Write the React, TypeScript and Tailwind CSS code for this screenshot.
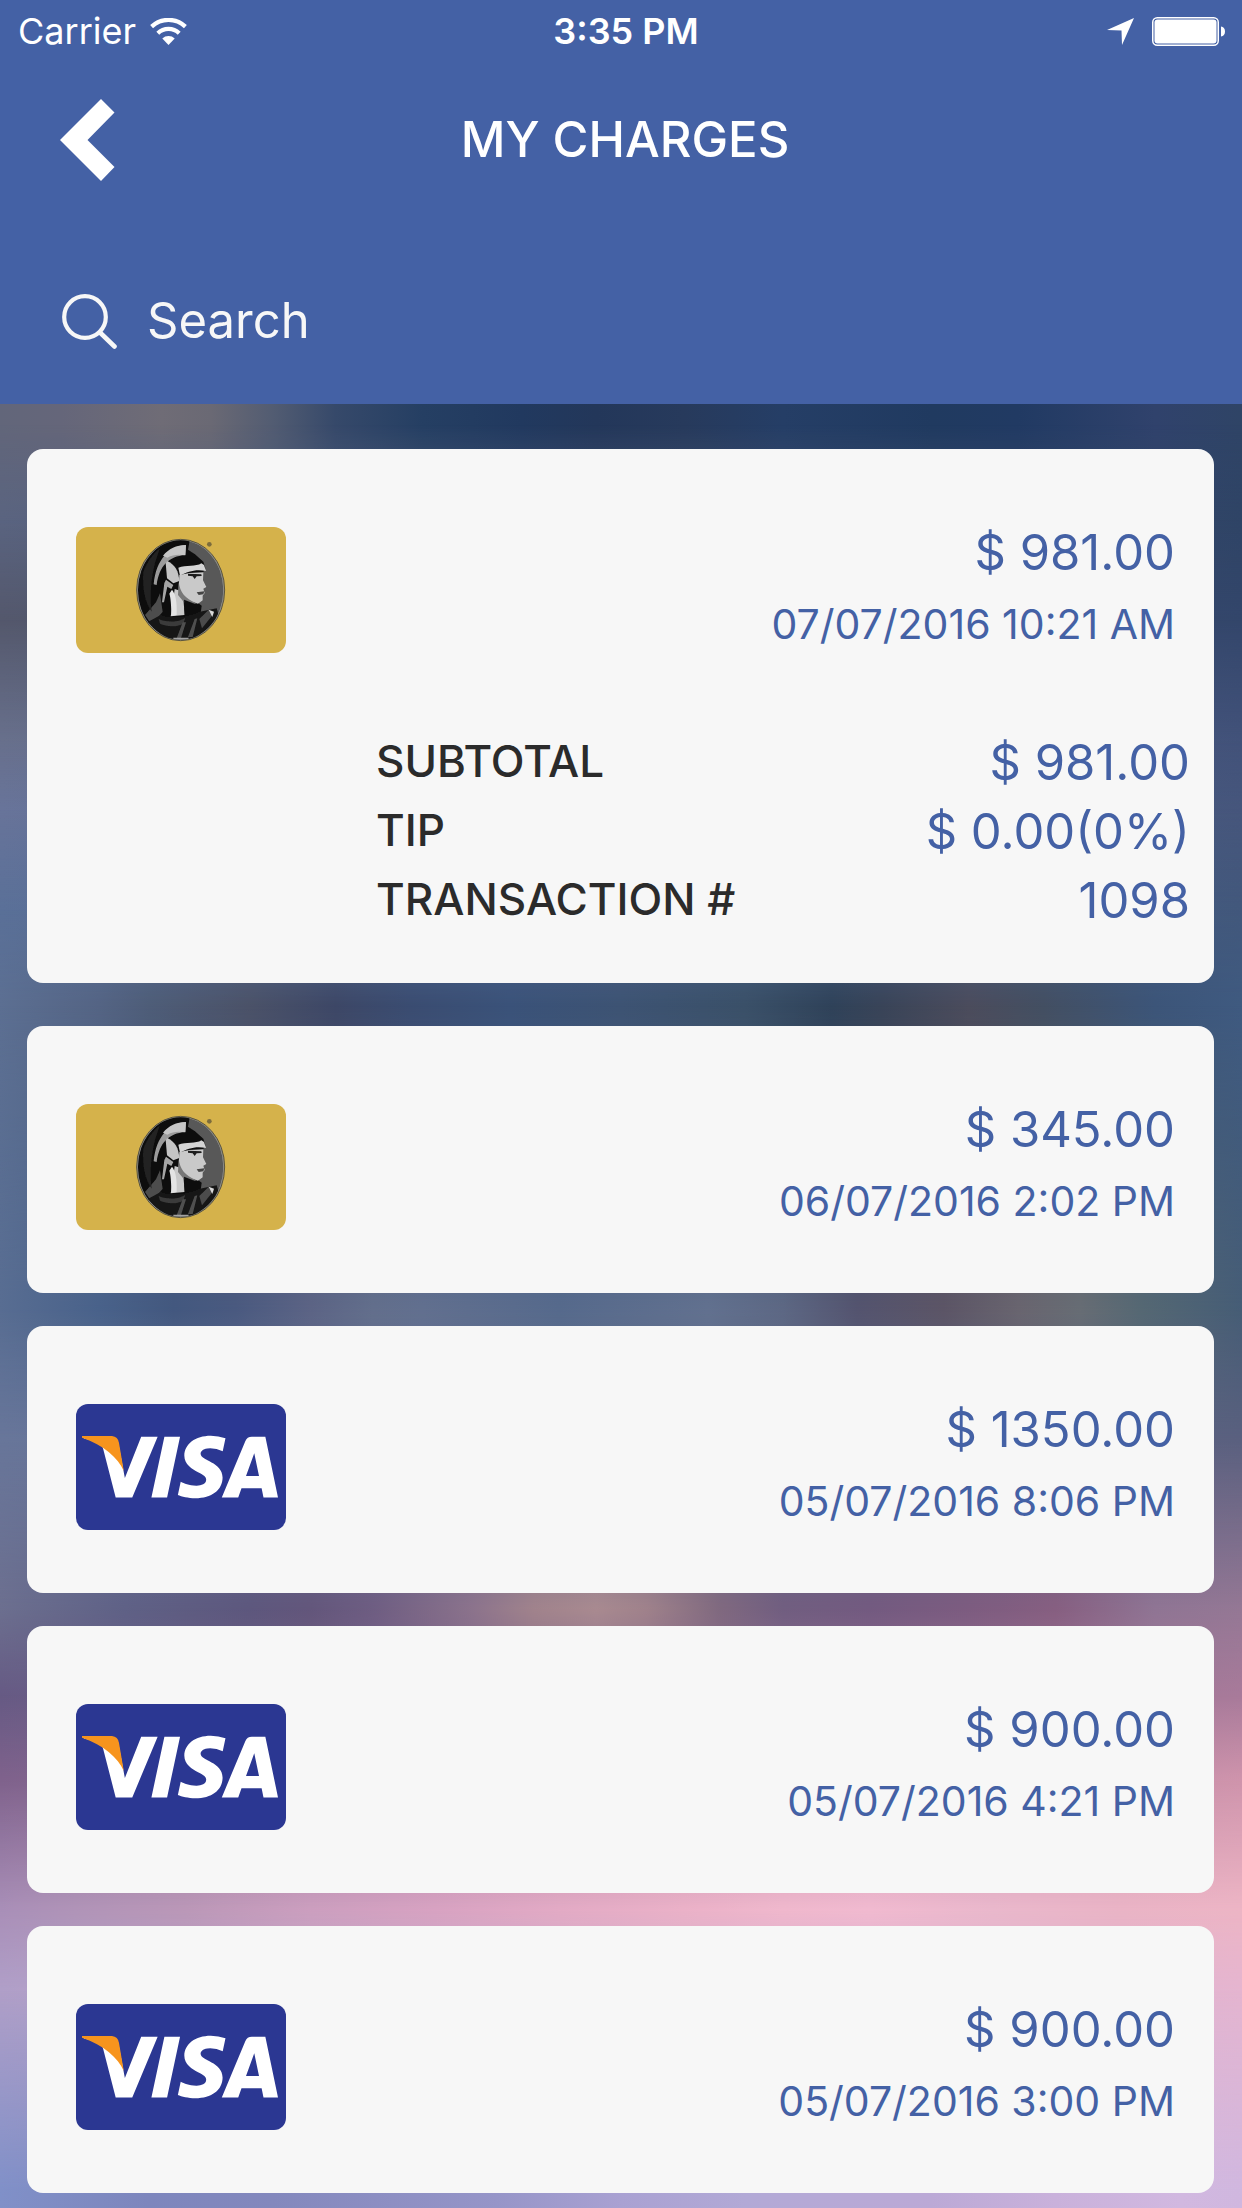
import { useState } from "react";
import { SiVisa } from "react-icons/si";

type CardType = "amex" | "visa";

interface Charge {
    id: number;
    card: CardType;
    total: string;
    date: string;
    tip: string;
}

const charges: Charge[] = [
    { id: 1098, card: "amex", total: "$ 981.00", date: "07/07/2016 10:21 AM", tip: "$ 0.00(0%)" },
    { id: 1097, card: "amex", total: "$ 345.00", date: "06/07/2016 2:02 PM", tip: "$ 0.00(0%)" },
    { id: 1096, card: "visa", total: "$ 1350.00", date: "05/07/2016 8:06 PM", tip: "$ 0.00(0%)" },
    { id: 1095, card: "visa", total: "$ 900.00", date: "05/07/2016 4:21 PM", tip: "$ 0.00(0%)" },
    { id: 1094, card: "visa", total: "$ 900.00", date: "05/07/2016 3:00 PM", tip: "$ 0.00(0%)" },
];

// wallpaper colours, one band per row: y (out of 2208) and [x percent, colour] stops
const bands: { y: number; stops: [number, string][] }[] = [
    { y: 425, stops: [[0, "#62667a"], [5, "#65667a"], [13, "#6f6c76"], [17, "#6a6974"], [22, "#525c72"], [27, "#36496a"], [34, "#253f63"], [42, "#21395f"], [48, "#23375a"], [55, "#273a5c"], [63, "#253e66"], [75, "#203a60"], [82, "#213a63"], [93, "#30426c"], [100, "#2f4466"]] },
    { y: 520, stops: [[0, "#5a6480"], [100, "#2f4466"]] },
    { y: 620, stops: [[0, "#54586c"], [100, "#33466b"]] },
    { y: 740, stops: [[0, "#68708c"], [100, "#42527a"]] },
    { y: 810, stops: [[0, "#68749a"], [100, "#46567c"]] },
    { y: 910, stops: [[0, "#5a7098"], [100, "#42587c"]] },
    { y: 1005, stops: [[0, "#5c6f92"], [8, "#546484"], [12, "#4e5d78"], [20, "#4b5268"], [27, "#3d4766"], [33, "#3a4c71"], [41, "#3a5279"], [50, "#3d5373"], [60, "#3a5068"], [67, "#2f4259"], [71, "#394458"], [78, "#4b4c5c"], [84, "#434f62"], [93, "#3c5579"], [100, "#3f5a80"]] },
    { y: 1310, stops: [[0, "#586d92"], [8, "#49628a"], [14, "#43587f"], [19, "#4a5a80"], [25, "#5c6485"], [30, "#636f8c"], [34, "#62708f"], [45, "#566a8c"], [57, "#62718f"], [63, "#5d6884"], [69, "#54546f"], [76, "#5c5566"], [82, "#69656f"], [87, "#676d74"], [92, "#556873"], [100, "#465d76"]] },
    { y: 1440, stops: [[0, "#68769a"], [100, "#5a607f"]] },
    { y: 1610, stops: [[0, "#6c6f8f"], [10, "#5f6186"], [20, "#5d577d"], [25, "#63567b"], [30, "#6e5d82"], [38, "#8c738c"], [43, "#a1838c"], [48, "#a98a90"], [52, "#a0828b"], [58, "#80697f"], [63, "#715e80"], [70, "#735a80"], [78, "#7d5c80"], [85, "#875f81"], [93, "#907594"], [100, "#957895"]] },
    { y: 1695, stops: [[0, "#665a84"], [100, "#a87a9a"]] },
    { y: 1780, stops: [[0, "#7f628c"], [100, "#cf94ac"]] },
    { y: 1910, stops: [[0, "#a98fb8"], [6, "#b094b8"], [15, "#bb98b8"], [25, "#cc9fbf"], [35, "#d8a3c2"], [45, "#e3abc5"], [55, "#ebb2c8"], [63, "#f0b8cd"], [70, "#f1bad0"], [80, "#eab8cc"], [90, "#eab4c6"], [100, "#edb5c5"]] },
    { y: 1990, stops: [[0, "#b09fc8"], [100, "#e5b5d0"]] },
    { y: 2190, stops: [[0, "#8090c8"], [12, "#7d86bd"], [22, "#8388bd"], [40, "#9695c8"], [50, "#a9a1d2"], [60, "#b2a9d6"], [75, "#bba9d6"], [85, "#c9b1db"], [95, "#d1b8e0"], [100, "#d0b7df"]] },
];

function Wallpaper() {
    return (
        <svg className="absolute inset-0 -z-10 h-full w-full" viewBox="0 0 100 2208" preserveAspectRatio="none" aria-hidden="true">
            <defs>
                {bands.map((band, i) => {
                    const prev = i === 0 ? 0 : bands[i - 1].y;
                    return (
                        <g key={band.y}>
                            <linearGradient id={`band${i}`}>
                                {band.stops.map(([x, color]) => (
                                    <stop key={x} offset={`${x}%`} stopColor={color} />
                                ))}
                            </linearGradient>
                            <linearGradient id={`fade${i}`} gradientUnits="userSpaceOnUse" x1="0" y1={prev} x2="0" y2={band.y}>
                                <stop offset="0" stopColor="#fff" stopOpacity={i === 0 ? 1 : 0} />
                                <stop offset="1" stopColor="#fff" />
                            </linearGradient>
                            <mask id={`mask${i}`} maskUnits="userSpaceOnUse" x="0" y="0" width="100" height="2208">
                                <rect y={prev} width="100" height={2208 - prev} fill={`url(#fade${i})`} />
                            </mask>
                        </g>
                    );
                })}
            </defs>
            {bands.map((band, i) => (
                <rect key={band.y} width="100" height="2208" fill={`url(#band${i})`} mask={`url(#mask${i})`} />
            ))}
        </svg>
    );
}

function WifiIcon() {
    return (
        <svg className="h-[27px] w-[37px]" viewBox="0 0 37 27" fill="none" aria-hidden="true">
            <path d="M1.6 8.6a24.6 24.6 0 0 1 33.8 0" stroke="#fff" strokeWidth="4.2" />
            <path d="M7.8 15.2a15.6 15.6 0 0 1 21.4 0" stroke="#fff" strokeWidth="4.2" />
            <path d="M12.3 20.6a9 9 0 0 1 12.4 0L18.5 27z" fill="#fff" />
        </svg>
    );
}

function StatusBar() {
    return (
        <div className="grid h-[62px] grid-cols-3 items-center pr-4 pl-[18px] text-[36px] leading-[44px]">
            <div className="flex items-center gap-[14px]">
                <span>Carrier</span>
                <WifiIcon />
            </div>
            <div className="pl-2 text-center font-semibold">3:35 PM</div>
            <div className="flex items-center justify-end gap-[18px]">
                <svg className="h-[27px] w-[27px]" viewBox="0 0 27 27" aria-hidden="true">
                    <path d="M27 0L15 27L14.500 12.500L0 12z" fill="#fff" />
                </svg>
                <svg className="h-[29px] w-[74px]" viewBox="0 0 74 29" aria-hidden="true">
                    <rect x="0.750" y="0.750" width="65.500" height="27.500" rx="4.500" fill="none" stroke="#fff" strokeWidth="1.500" />
                    <rect x="2.500" y="2.500" width="62" height="24" rx="3" fill="#fff" />
                    <path d="M69 9.500c2.500 0 4 2.200 4 5s-1.500 5-4 5z" fill="#fff" />
                </svg>
            </div>
        </div>
    );
}

function AmexLogo() {
    return (
        <svg className="h-[126px] w-[210px] rounded-xl bg-[#d5b24b]" viewBox="48 36 630 378" role="img" aria-label="American Express">
            <defs>
                <clipPath id="oval">
                    <ellipse cx="362" cy="225" rx="128" ry="149" />
                </clipPath>
                <filter id="soft">
                    <feGaussianBlur stdDeviation="2" />
                </filter>
            </defs>
            <circle cx="448" cy="88" r="7" fill="#7c6c3c" />
            <g filter="url(#soft)">
                <ellipse cx="362" cy="225" rx="132" ry="152" fill="#8b8b88" stroke="#5a543c" strokeWidth="3" />
                <g clipPath="url(#oval)">
                    <ellipse cx="362" cy="225" rx="128" ry="149" fill="#585858" />
                    <path d="M225 60H392L384 104L405 118L430 140L436 160L420 190L410 260L425 272L420 310L340 330L265 325L225 320z" fill="#0c0c0c" />
                    <path d="M300 235L308 290L275 330L255 300L288 262z" fill="#4e4e4e" />
                    <path d="M250 170C262 140 280 115 300 100C275 160 268 230 275 290C255 262 246 220 250 170z" fill="#222" />
                    <path d="M378 90C330 92 288 132 281 208L290 210C298 152 326 124 376 120z" fill="#9b9b9b" />
                    <path d="M378 90C350 90 325 102 309 122L322 128C340 118 356 118 376 121z" fill="#c6c6c6" />
                    <path d="M322 138L317 144L321 190L340 205L358 198C356 168 346 150 322 138z" fill="#c4c4c4" />
                    <path d="M355 158C378 150 408 156 424 145L432 150L438 168C405 162 384 170 360 182z" fill="#d4d4d4" />
                    <path d="M358 180L388 174L430 172L429 196L439 216L430 221L434 234L428 242L428 256L414 266L388 258L370 250L374 300L332 304C338 278 340 250 344 222L356 226z" fill="#c9c9c9" />
                    <path d="M384 176L424 178L425 183L410 184L404 192L398 184L384 182z" fill="#1b1b1b" />
                    <path d="M410 232L433 229L430 238L416 240z" fill="#444" />
                    <path d="M356 200C360 232 375 250 408 264L398 276L372 262L354 240z" fill="#777" />
                    <path d="M372 254L408 268L420 280L410 296L374 300z" fill="#111" />
                    <path d="M318 194L340 210L334 222L322 215L312 262L306 262L313 204z" fill="#a5a5a5" />
                    <path d="M336 224C346 236 352 258 350 300L334 303C334 272 332 246 328 236z" fill="#e4e4e4" />
                    <path d="M262 322L302 300C330 312 380 308 420 290L470 280L482 320L420 380L320 380z" fill="#161616" />
                    <path d="M296 312C330 326 362 318 376 308L370 326C345 338 318 334 300 326z" fill="#3a3a3a" />
                    <path d="M350 370L368 322L378 322L362 372zM384 366L404 312L412 310L398 366z" fill="#505050" />
                    <path d="M418 312L446 284L458 300L426 340z" fill="#4b4b4b" />
                    <path d="M446 284L462 290L457 306z" fill="#d9d9d9" />
                    <path d="M340 368H386V380H340z" fill="#a2a2a2" />
                </g>
            </g>
        </svg>
    );
}

function VisaLogo() {
    return (
        <div className="relative flex h-[126px] w-[210px] items-center justify-center overflow-hidden rounded-xl bg-[#2b3792]" role="img" aria-label="Visa">
            <SiVisa className="h-[194px] w-[194px] shrink-0 text-white" />
            <svg className="absolute inset-0 h-full w-full" viewBox="0 0 210 126" aria-hidden="true">
                <path d="M6 32H36Q42 32.500 43 39L47.800 67C42 54 28 41 6 33.800z" fill="#f7941d" />
            </svg>
        </div>
    );
}

function DetailRow({ label, value }: { label: string; value: string | number }) {
    return (
        <div className="flex h-[69px] items-start justify-between">
            <dt className="text-[44px] leading-[66px] font-medium text-[#2b2b2b]">{label}</dt>
            <dd className="text-[49px] leading-[70px]">{value}</dd>
        </div>
    );
}

function ChargeCard({ charge, open, onToggle }: { charge: Charge; open: boolean; onToggle: () => void }) {
    return (
        <li className={`rounded-2xl bg-[#f7f7f7] text-[#4461a5] ${open ? "mb-[10px]" : ""}`}>
            <button type="button" aria-expanded={open} onClick={onToggle} className="flex h-[267px] w-full items-start justify-between pr-[39px] pl-[49px] text-right">
                <span className="mt-[78px]">{charge.card === "amex" ? <AmexLogo /> : <VisaLogo />}</span>
                <span className="mt-[68px] flex flex-col">
                    <span className="text-[49px] leading-[72px]">{charge.total}</span>
                    <span className="text-[41px] leading-[70px]">{charge.date}</span>
                </span>
            </button>
            {open && (
                <dl className="h-[267px] pt-3 pr-6 pl-[349px]">
                    <DetailRow label="SUBTOTAL" value={charge.total} />
                    <DetailRow label="TIP" value={charge.tip} />
                    <DetailRow label="TRANSACTION #" value={charge.id} />
                </dl>
            )}
        </li>
    );
}

export default function App() {
    const [openId, setOpenId] = useState<number | null>(1098);
    const [query, setQuery] = useState("");

    const visible = charges.filter((c) => `${c.total} ${c.date}`.toLowerCase().includes(query.toLowerCase()));

    return (
        <div className="relative isolate min-h-screen font-['Inter',sans-serif]">
            <Wallpaper />
            <header className="bg-[#4461a5] text-white">
                <StatusBar />
                <div className="grid h-[156px] grid-cols-[1fr_auto_1fr] items-center pr-[52px] pl-[60px]">
                    <button type="button" aria-label="Back" className="justify-self-start">
                        <svg className="h-[82px] w-[55px]" viewBox="0 0 55 82" aria-hidden="true">
                            <path d="M41 0L54.500 13.500L27.500 41L54.500 68L41 82L0 41z" fill="#fff" />
                        </svg>
                    </button>
                    <h1 className="text-[49px] leading-[60px] font-medium">MY CHARGES</h1>
                </div>
                <label className="flex h-[186px] items-center gap-[30px] px-[62px] pt-5 text-[#f7f7f7]">
                    <svg className="h-[55px] w-[55px] shrink-0" viewBox="0 0 55 55" fill="none" stroke="#f7f7f7" aria-hidden="true">
                        <circle cx="23" cy="23" r="20.800" strokeWidth="4.200" />
                        <path d="M38 38.500L52.500 52.500" strokeWidth="4.600" strokeLinecap="round" />
                    </svg>
                    <input
                        type="search"
                        aria-label="Search"
                        placeholder="Search"
                        value={query}
                        onChange={(e) => setQuery(e.target.value)}
                        className="w-full bg-transparent text-[49px] leading-[60px] outline-none placeholder:text-[#f7f7f7]"
                    />
                </label>
            </header>
            <ul className="flex flex-col gap-[33px] pt-[45px] pr-7 pb-[15px] pl-[27px]">
                {visible.map((charge) => (
                    <ChargeCard
                        key={charge.id}
                        charge={charge}
                        open={openId === charge.id}
                        onToggle={() => setOpenId(openId === charge.id ? null : charge.id)}
                    />
                ))}
            </ul>
        </div>
    );
}
